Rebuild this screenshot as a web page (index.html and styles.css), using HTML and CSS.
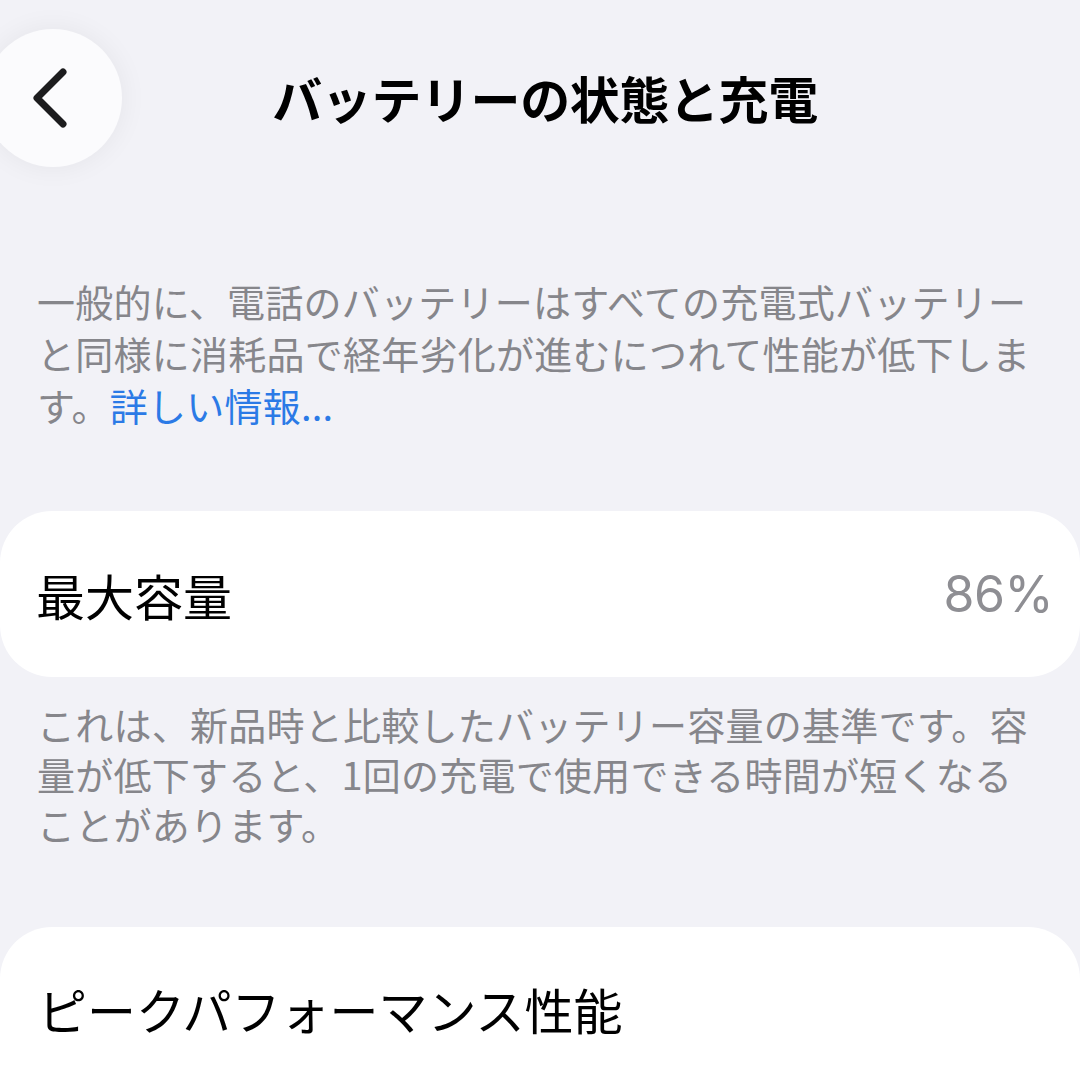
FILE: index.html
```html
<!DOCTYPE html>
<html lang="ja">
<head>
<meta charset="utf-8">
<link rel="stylesheet" href="styles.css">
</head>
<body>
<div class="page">
  <header class="nav">
    <div class="nav-left">
      <div class="back">
        <svg width="60" height="80" viewBox="0 0 60 80"><path d="M36 14 L10 40 L36 66" fill="none" stroke="#1c1c1e" stroke-width="7" stroke-linecap="round" stroke-linejoin="round"/></svg>
      </div>
    </div>
    <h1 class="title">バッテリーの状態と充電</h1>
    <div class="nav-right"></div>
  </header>

  <p class="note note-top">一般的に、電話のバッテリーはすべての充電式バッテリーと同様に消耗品で経年劣化が進むにつれて性能が低下します。<span class="link">詳しい情報...</span></p>

  <section class="card card-capacity">
    <span class="label">最大容量</span>
    <span class="value">86%</span>
  </section>

  <p class="note note-mid">これは、新品時と比較したバッテリー容量の基準です。容量が低下すると、1回の充電で使用できる時間が短くなることがあります。</p>

  <section class="card card-peak">
    <span class="label">ピークパフォーマンス性能</span>
  </section>
</div>
</body>
</html>
```

FILE: styles.css
```css
html, body {
  margin: 0;
  padding: 0;
  background: #f2f2f7;
}
body {
  width: 1080px;
  height: 1080px;
  overflow: hidden;
  font-family: "Noto Sans CJK JP", "Noto Sans", sans-serif;
}
.page {
  display: flex;
  flex-direction: column;
}
.nav {
  display: grid;
  grid-template-columns: 1fr auto 1fr;
  align-items: center;
  padding-top: 29px;
  height: 138px;
}
.nav-left {
  display: flex;
}
.back {
  margin-left: -16px;
  width: 138px;
  height: 138px;
  border-radius: 50%;
  background: #fbfbfd;
  box-shadow: 0 0 28px rgba(0, 0, 0, 0.06);
  display: flex;
  align-items: center;
  justify-content: center;
}
.back svg {
  margin-left: 8px;
}
.title {
  margin: 0;
  padding-left: 10px;
  font-size: 50px;
  font-weight: 700;
  color: #000;
  line-height: 60px;
  letter-spacing: -0.4px;
  position: relative;
  top: -1px;
}
.note {
  margin: 0;
  padding: 0 30px 0 37px;
  font-size: 38px;
  color: #86868b;
  font-weight: 400;
  letter-spacing: 0.25px;
}
.note-top {
  margin-top: 108px;
  line-height: 52px;
}
.link {
  color: #2b7ae6;
}
.card {
  background: #fff;
  border-radius: 52px;
  display: flex;
  align-items: center;
  justify-content: space-between;
  padding: 0 27px 0 36px;
  height: 166px;
  flex-shrink: 0;
}
.card-capacity {
  margin-top: 80px;
}
.label {
  font-size: 49px;
  color: #000;
  font-weight: 400;
}
.value {
  font-family: "Inter", "Liberation Sans", sans-serif;
  font-size: 50px;
  color: #8e8e93;
  letter-spacing: -0.5px;
}
.note-mid {
  margin-top: 22px;
  line-height: 50px;
}
.card-peak {
  margin-top: 78px;
  align-items: flex-start;
  padding-top: 46px;
  padding-left: 38px;
  height: 200px;
}
```
